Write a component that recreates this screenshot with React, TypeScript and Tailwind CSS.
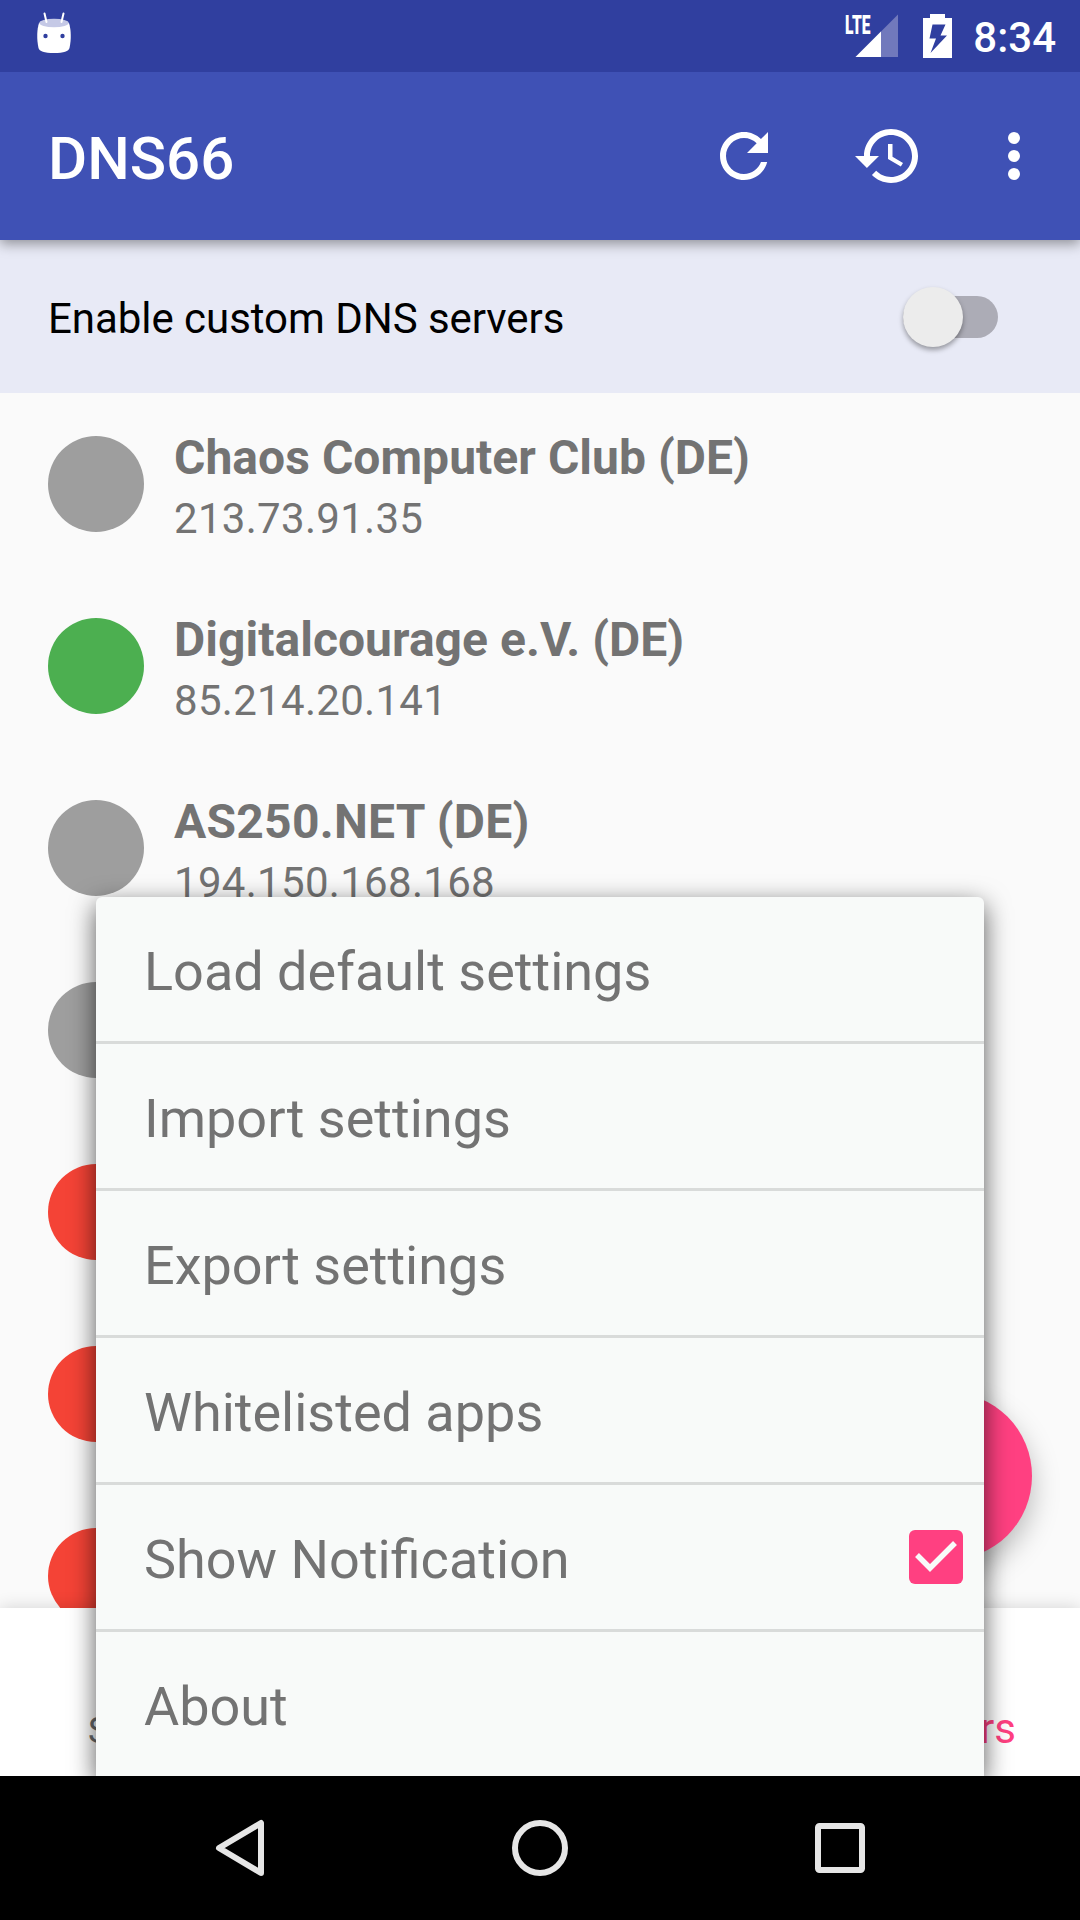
import React from "react";

const servers = [
  { name: "Chaos Computer Club (DE)", ip: "213.73.91.35", color: "bg-[#9e9e9e]", tracking: "tracking-[0.04px]" },
  { name: "Digitalcourage e.V. (DE)", ip: "85.214.20.141", color: "bg-[#4caf50]", tracking: "tracking-[0.04px]" },
  { name: "AS250.NET (DE)", ip: "194.150.168.168", color: "bg-[#9e9e9e]", tracking: "tracking-[0.26px]" },
  { name: "", ip: "", color: "bg-[#9e9e9e]", tracking: "" },
  { name: "", ip: "", color: "bg-[#f44336]", tracking: "" },
  { name: "", ip: "", color: "bg-[#f44336]", tracking: "" },
  { name: "", ip: "", color: "bg-[#f44336]", tracking: "" },
];

const menu = [
  "Load default settings",
  "Import settings",
  "Export settings",
  "Whitelisted apps",
  "Show Notification",
  "About",
];

function StatusBar() {
  return (
    <div className="relative z-20 flex h-[72px] items-start bg-[#303f9f] text-white">
      <svg className="ml-[36px] mt-[12px] h-[42px] w-[36px]" viewBox="0 0 36 42">
        <path d="M3 11C1 17 0.500 27 2.500 36C3.500 39.500 8 41 18 41S32.500 39.500 33.500 36C35.500 27 35 17 33 11Z" fill="#fff" />
        <ellipse cx="18" cy="11" rx="14.800" ry="4.200" fill="#c5c9e6" />
        <path d="M8.500 1.500L10.500 10M27.500 1.500L25.500 10" stroke="#fff" strokeWidth="2" strokeLinecap="round" />
        <circle cx="9.500" cy="24" r="2.200" fill="#303f9f" />
        <circle cx="26.500" cy="24" r="2.200" fill="#303f9f" />
      </svg>
      <div className="ml-auto flex items-start">
        <div className="mt-[15px] w-[10px] origin-top-left scale-x-[0.600] text-[26px] font-black leading-[20px]">LTE</div>
        <svg className="mt-[14px] h-[44px] w-[44px]" viewBox="0 0 44 44">
          <path d="M43 0.500V43H0.500Z" fill="#7179bc" />
          <path d="M26 17.500V43H0.500Z" fill="#fff" />
        </svg>
        <svg className="ml-[24px] mt-[14px] h-[44px] w-[29px]" viewBox="0 0 29 44">
          <path fillRule="evenodd" d="M7 0H22V4H29V44H0V4H7ZM9.500 10.500L6.500 24.500H13L7.500 39L24 21.500H17.500L22.500 10.500Z" fill="#fff" />
        </svg>
        <div className="ml-[21px] mr-[24px] mt-[13px] text-[42px] font-medium leading-[50px]">8:34</div>
      </div>
    </div>
  );
}

function Toolbar() {
  return (
    <div className="relative z-10 flex h-[168px] items-center bg-[#3f51b5] pl-[48px] pr-[30px] text-white shadow-[0_4px_12px_rgba(0,0,0,0.38)]">
      <h1 className="flex-1 pt-[5px] text-[60px] font-medium leading-[72px]">DNS66</h1>
      <svg className="h-[72px] w-[72px]" viewBox="0 0 24 24" fill="currentColor">
        <path d="M17.650 6.350C16.200 4.900 14.210 4 12 4c-4.420 0-7.990 3.580-7.990 8s3.570 8 7.990 8c3.730 0 6.840-2.550 7.730-6h-2.080c-.82 2.330-3.040 4-5.650 4-3.310 0-6-2.690-6-6s2.690-6 6-6c1.660 0 3.140.69 4.220 1.780L13 11h7V4l-2.350 2.350z" />
      </svg>
      <svg className="ml-[72px] h-[72px] w-[72px]" viewBox="0 0 24 24" fill="currentColor">
        <path d="M13 3c-4.970 0-9 4.030-9 9H1l3.890 3.890.07.14L9 12H6c0-3.870 3.130-7 7-7s7 3.130 7 7-3.130 7-7 7c-1.930 0-3.680-.79-4.940-2.060l-1.420 1.420C8.270 19.990 10.510 21 13 21c4.970 0 9-4.030 9-9s-4.030-9-9-9zm-1 5v5l4.280 2.540.72-1.210-3.500-2.080V8H12z" />
      </svg>
      <svg className="ml-[54px] h-[72px] w-[72px]" viewBox="0 0 24 24" fill="currentColor">
        <circle cx="12" cy="6" r="2" />
        <circle cx="12" cy="12" r="2" />
        <circle cx="12" cy="18" r="2" />
      </svg>
    </div>
  );
}

function OverflowMenu() {
  return (
    <div className="absolute left-[96px] top-[897px] w-[888px] rounded-t-[6px] bg-[#f8faf9] shadow-[0_8px_26px_rgba(0,0,0,0.65)]">
      {menu.map((label, i) => (
        <div
          key={label}
          className={
            i === 0
              ? "flex h-[144px] items-center justify-between pl-[48px] pr-[21px]"
              : "flex h-[147px] items-center justify-between border-t-[3px] border-[#d9dbda] pl-[48px] pr-[21px]"
          }
        >
          <span className="pt-[6px] text-[54px] leading-[64px] text-[#737373]">{label}</span>
          {label === "Show Notification" && (
            <svg className="h-[54px] w-[54px]" viewBox="0 0 54 54">
              <rect width="54" height="54" rx="6" fill="#ff4081" />
              <path d="M8 25L21 38L46 13" fill="none" stroke="#f8faf9" strokeWidth="5.500" />
            </svg>
          )}
        </div>
      ))}
    </div>
  );
}

export default function App() {
  return (
    <div className="flex h-[1920px] w-[1080px] flex-col overflow-hidden bg-black font-['Roboto',sans-serif]">
      <div className="relative flex h-[1776px] flex-col overflow-hidden bg-[#fafafa]">
        <StatusBar />
        <Toolbar />
        <div className="flex h-[153px] shrink-0 items-center justify-between bg-[#e8eaf6] pl-[48px] pr-[82px]">
          <span className="pt-[4px] text-[42px] leading-[50px] tracking-[-0.04px] text-black">Enable custom DNS servers</span>
          <div className="flex h-[42px] w-[95.5px] items-center rounded-full bg-[#acacb6]">
            <div className="h-[60px] w-[60px] shrink-0 rounded-full bg-[#ececec] shadow-[0_3px_5px_rgba(0,0,0,0.35)]" />
          </div>
        </div>
        <div className="h-[1215px] shrink-0 overflow-hidden">
          {servers.map((s, i) => (
            <div key={i} className="flex h-[182px] items-center pl-[48px]">
              <div className={"h-[96px] w-[96px] shrink-0 rounded-full " + s.color} />
              <div className="ml-[30px] pt-[3px] text-[#737373]">
                <div className={"h-[64px] text-[48px] font-bold leading-[63px] " + s.tracking}>{s.name}</div>
                <div className="h-[56px] text-[42px] leading-[58px] tracking-[0.3px]">{s.ip}</div>
              </div>
            </div>
          ))}
        </div>
        <div className="absolute left-[864px] top-[1392px] h-[168px] w-[168px] rounded-full bg-[#ff4081] shadow-[0_12px_28px_rgba(0,0,0,0.26)]" />
        <div className="relative flex h-[168px] shrink-0 items-baseline justify-between bg-white pl-[88px] pr-[64px] pt-[100px] shadow-[0_0_16px_rgba(0,0,0,0.16)]">
          <span className="w-[10px] overflow-visible text-[36px] leading-[42px] text-[#6b6b6b]">Start</span>
          <span className="text-[42px] leading-[42px] text-[#ff4081]">Servers</span>
        </div>
        <OverflowMenu />
      </div>
      <div className="flex h-[144px] items-center justify-center gap-[228px] bg-black">
        <svg className="h-[72px] w-[72px]" viewBox="0 0 72 72">
          <path d="M57 11V61L15 36Z" fill="none" stroke="#e6e6e6" strokeWidth="6" strokeLinejoin="round" />
        </svg>
        <svg className="h-[72px] w-[72px]" viewBox="0 0 72 72">
          <circle cx="36" cy="36" r="25" fill="none" stroke="#e6e6e6" strokeWidth="6" />
        </svg>
        <svg className="h-[72px] w-[72px]" viewBox="0 0 72 72">
          <rect x="14" y="14" width="44" height="44" rx="1.500" fill="none" stroke="#e6e6e6" strokeWidth="6" />
        </svg>
      </div>
    </div>
  );
}
